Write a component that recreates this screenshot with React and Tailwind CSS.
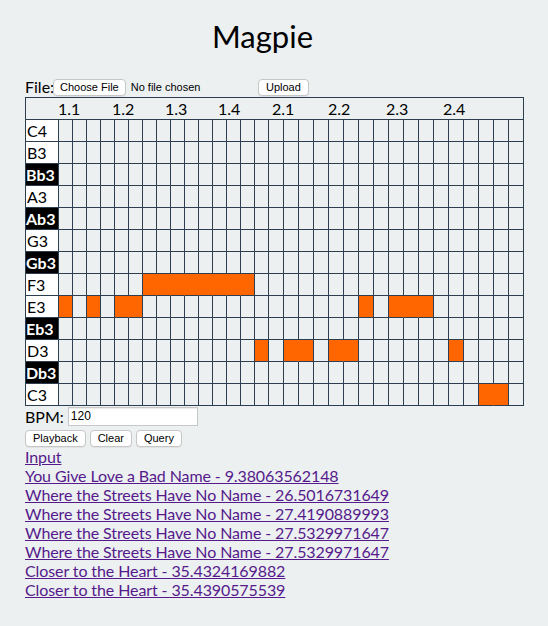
const NOTES = [
  { name: "C4", black: false },
  { name: "B3", black: false },
  { name: "Bb3", black: true },
  { name: "A3", black: false },
  { name: "Ab3", black: true },
  { name: "G3", black: false },
  { name: "Gb3", black: true },
  { name: "F3", black: false },
  { name: "E3", black: false },
  { name: "Eb3", black: true },
  { name: "D3", black: false },
  { name: "Db3", black: true },
  { name: "C3", black: false }
]

// which 16th-note steps are switched on, per pitch
const ACTIVE = {
  F3: [6, 7, 8, 9, 10, 11, 12, 13],
  E3: [0, 2, 4, 5, 21, 23, 24, 25],
  D3: [14, 16, 17, 19, 20, 27],
  C3: [29, 30]
}

const BEATS = [
  { label: "1.1", w: "w-[54px]" },
  { label: "1.2", w: "w-[53px]" },
  { label: "1.3", w: "w-[53px]" },
  { label: "1.4", w: "w-[54px]" },
  { label: "2.1", w: "w-[56px]" },
  { label: "2.2", w: "w-[58px]" },
  { label: "2.3", w: "w-[57px]" },
  { label: "2.4", w: "w-[40px]" }
]

const RESULTS = [
  "Input",
  "You Give Love a Bad Name - 9.38063562148",
  "Where the Streets Have No Name - 26.5016731649",
  "Where the Streets Have No Name - 27.4190889993",
  "Where the Streets Have No Name - 27.5329971647",
  "Where the Streets Have No Name - 27.5329971647",
  "Closer to the Heart - 35.4324169882",
  "Closer to the Heart - 35.4390575539"
]

const STEPS = Array.from({ length: 32 }, (_, i) => i)

function Btn({ children, tight }) {
  return (
    <button
      className={`h-[17px] ${tight ? "px-[6px]" : "px-[7px]"} bg-white border border-[#c6c6c6] rounded-[4px] text-[11px] leading-[13px] text-black font-['Liberation_Sans',Arial,sans-serif] shadow-[0_1px_0_rgba(0,0,0,0.05)]`}
    >
      {children}
    </button>
  )
}

function NoteRow({ note }) {
  const on = ACTIVE[note.name] || []

  return (
    <div className="grid grid-cols-[33px_repeat(15,14px)_repeat(17,15px)] h-[22px]">
      <div
        className={`border-r border-b border-[#2c3e50] leading-[21px] text-[16px] ${
          note.black ? "bg-black text-white font-bold" : "bg-white text-black pl-px"
        }`}
      >
        {note.name}
      </div>
      {STEPS.map((s) => {
        const active = on.includes(s)
        const joined = active && on.includes(s + 1)
        return (
          <div
            key={s}
            className={`border-b border-b-[#2c3e50] border-r ${
              joined ? "border-r-[#ff6600]" : "border-r-[#2c3e50]"
            } ${active ? "bg-[#ff6600]" : ""}`}
          />
        )
      })}
    </div>
  )
}

export default function App() {
  return (
    <div className="min-h-screen bg-[#ecf0f1] font-['Lato',sans-serif] text-black pl-[25px] pt-[17px] pb-6">
      <h1 className="w-[525px] -ml-[25px] text-center text-[31px] leading-[38px] font-normal">
        Magpie
      </h1>

      {/* upload */}
      <div className="flex items-center h-[21px] mt-[21px] text-[16px] leading-[19px]">
        <span className="w-[28px]">File:</span>
        <span className="flex items-center w-[205px] translate-y-[1px]">
          <Btn tight>Choose File</Btn>
          <span className="ml-[5px] text-[11px] font-['Liberation_Sans',Arial,sans-serif]">
            No file chosen
          </span>
        </span>
        <span className="flex items-center translate-y-[1px]">
          <Btn>Upload</Btn>
        </span>
      </div>

      {/* piano roll */}
      <div className="w-fit border-l border-t border-[#2c3e50]">
        <div className="flex h-[22px] border-r border-b border-[#2c3e50] pl-[32px] text-[16px] leading-[21px]">
          {BEATS.map((b) => (
            <span key={b.label} className={b.w}>
              {b.label}
            </span>
          ))}
        </div>
        {NOTES.map((n) => (
          <NoteRow key={n.name} note={n} />
        ))}
      </div>

      {/* tempo */}
      <div className="flex items-center h-[21px] gap-[4px] text-[16px] leading-[19px]">
        <span>BPM:</span>
        <input
          defaultValue="120"
          className="w-[130px] h-[19px] px-[2px] bg-white border border-[#c8c8c8] shadow-[inset_0_1px_1px_rgba(0,0,0,0.08)] text-[12px] font-['Liberation_Sans',Arial,sans-serif] outline-none"
        />
      </div>

      <div className="flex gap-[4px] mt-[3px]">
        <Btn>Playback</Btn>
        <Btn>Clear</Btn>
        <Btn>Query</Btn>
      </div>

      <div className="flex flex-col items-start text-[16px] leading-[19px] tracking-[-0.1px]">
        {RESULTS.map((r, i) => (
          <a key={i} href="#" className="text-[#551a8b] underline">
            {r}
          </a>
        ))}
      </div>
    </div>
  )
}
